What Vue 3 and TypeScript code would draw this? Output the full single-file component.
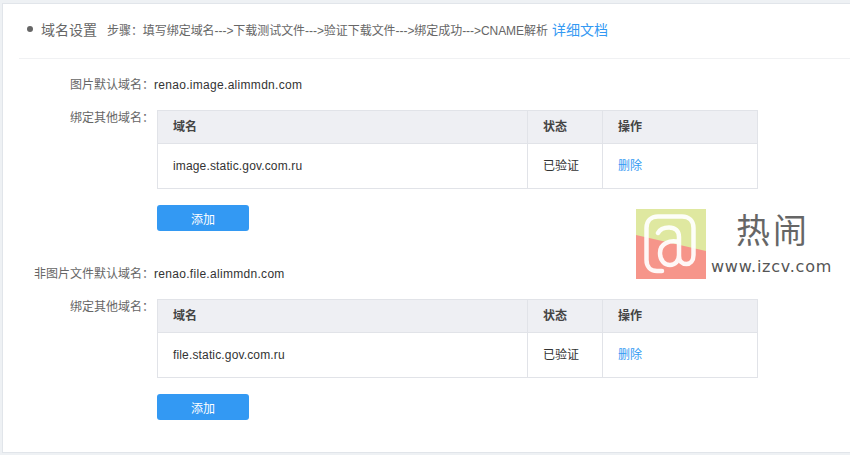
<script setup lang="ts">
interface Section {
  label: string
  value: string
  domain: string
}
const sections: Section[] = [
  { label: '图片默认域名：', value: 'renao.image.alimmdn.com', domain: 'image.static.gov.com.ru' },
  { label: '非图片文件默认域名：', value: 'renao.file.alimmdn.com', domain: 'file.static.gov.com.ru' },
]
</script>

<template>
  <div class="page">
    <div class="panel">
      <header class="head">
        <i class="dot"></i>
        <h2 class="title">域名设置</h2>
        <span class="steps">步骤：填写绑定域名---&gt;下载测试文件---&gt;验证下载文件---&gt;绑定成功---&gt;CNAME解析</span>
        <a class="doc">详细文档</a>
      </header>
      <section v-for="s in sections" :key="s.value" class="sec">
        <div class="row">
          <span class="label">{{ s.label }}</span>
          <span class="value">{{ s.value }}</span>
        </div>
        <div class="row bind">
          <span class="label">绑定其他域名：</span>
          <div class="body">
            <div class="table">
              <div class="cell th">域名</div>
              <div class="cell th">状态</div>
              <div class="cell th">操作</div>
              <div class="cell td domain">{{ s.domain }}</div>
              <div class="cell td">已验证</div>
              <div class="cell td"><a class="del">删除</a></div>
            </div>
            <button class="add" type="button">添加</button>
          </div>
        </div>
      </section>
    </div>
    <div class="mark">
      <svg class="mark-logo" width="70" height="70" viewBox="0 0 70 70">
        <rect width="70" height="70" fill="#dfe8a0" />
        <polygon points="0,26 70,42 70,70 0,70" fill="#f6958a" />
        <path d="M26 62H21C14 62 10.5 57 10.5 51V19C10.5 12 15 7.5 22 7.5H46C53 7.5 57.5 12 57.5 19V46C57.5 52 54 55 50.5 55C46 55 43 52 43 47V28C43 22 39 18.5 33 18.5C28 18.5 24 20 22 24M43 33C34 31 24 34 24 44C24 52 29 56 34 56C39 56 43 52 43 46" fill="none" stroke="#fff" stroke-width="4.5" stroke-linecap="round" stroke-linejoin="round" opacity="0.92" />
      </svg>
      <div class="mark-text">
        <span class="mark-cn">热闹</span>
        <span class="mark-url">www.izcv.com</span>
      </div>
    </div>
  </div>
</template>

<style>
html, body { margin: 0; padding: 0; background: #eef1f4; }
</style>

<style scoped>
.page {
  position: relative;
  width: 850px;
  height: 455px;
  box-sizing: border-box;
  padding: 3px 0 2px 2px;
  background: #eef1f4;
  overflow: hidden;
  font-family: "Liberation Sans", "Noto Sans CJK SC", sans-serif;
  color: #333;
}
.panel {
  height: 100%;
  box-sizing: border-box;
  background: #fff;
  border: 1px solid #e1e5ea;
  border-right: 0;
  padding-left: 16px;
}
.head {
  display: flex;
  align-items: center;
  height: 50px;
  padding: 0 0 4px 8px;
  border-bottom: 1px solid #f0f1f3;
}
.dot {
  width: 6px;
  height: 6px;
  border-radius: 50%;
  background: #666;
  margin-right: 8px;
}
.title {
  margin: 0 10px 0 0;
  width: 56px;
  font-size: 14px;
  font-weight: 400;
  color: #666;
  white-space: nowrap;
}
.steps {
  font-size: 12px;
  letter-spacing: -0.05px;
  color: #666;
  white-space: nowrap;
}
.doc {
  margin-left: 4px;
  font-size: 14px;
  color: #3399f3;
  white-space: nowrap;
}
.sec {
  padding-top: 18px;
}
.sec + .sec {
  padding-top: 35px;
}
.row {
  display: flex;
  align-items: flex-start;
  font-size: 12px;
  line-height: 16px;
}
.label {
  flex: none;
  width: 135px;
  text-align: right;
  color: #666;
  white-space: nowrap;
}
.value {
  color: #333;
  letter-spacing: 0.3px;
}
.bind {
  margin-top: 17px;
}
.body {
  margin-left: 3px;
}
.table {
  display: grid;
  grid-template-columns: 370px 75px 155px;
  width: 601px;
  box-sizing: border-box;
  border: 1px solid #e1e3e8;
  border-right: 0;
  border-bottom: 0;
}
.cell {
  display: flex;
  align-items: center;
  padding-left: 15px;
  box-sizing: border-box;
  border-right: 1px solid #e1e3e8;
  border-bottom: 1px solid #e1e3e8;
  font-size: 12px;
}
.th {
  height: 33px;
  background: #eeeff3;
  font-weight: 700;
  color: #444;
}
.td {
  height: 45px;
  color: #333;
}
.domain {
  letter-spacing: 0.15px;
}
.del {
  color: #3399f3;
}
.add {
  display: block;
  width: 92px;
  height: 26px;
  margin-top: 16px;
  padding: 0;
  border: 0;
  border-radius: 3px;
  background: #3399f3;
  color: #fff;
  font: 12px "Liberation Sans", "Noto Sans CJK SC", sans-serif;
}
.mark {
  position: absolute;
  left: 636px;
  top: 209px;
  display: flex;
  gap: 5px;
  background: #fff;
}
.mark-logo {
  display: block;
  filter: blur(0.4px);
}
.mark-text {
  display: flex;
  flex-direction: column;
  align-items: flex-start;
}
.mark-cn {
  font-size: 34px;
  line-height: 44px;
  height: 46px;
  letter-spacing: 3px;
  color: #666;
  padding-left: 25px;
}
.mark-url {
  font-family: "DejaVu Sans", sans-serif;
  font-size: 16px;
  line-height: 20px;
  margin-top: 2px;
  color: #555;
  letter-spacing: 0.75px;
  white-space: nowrap;
}
</style>
